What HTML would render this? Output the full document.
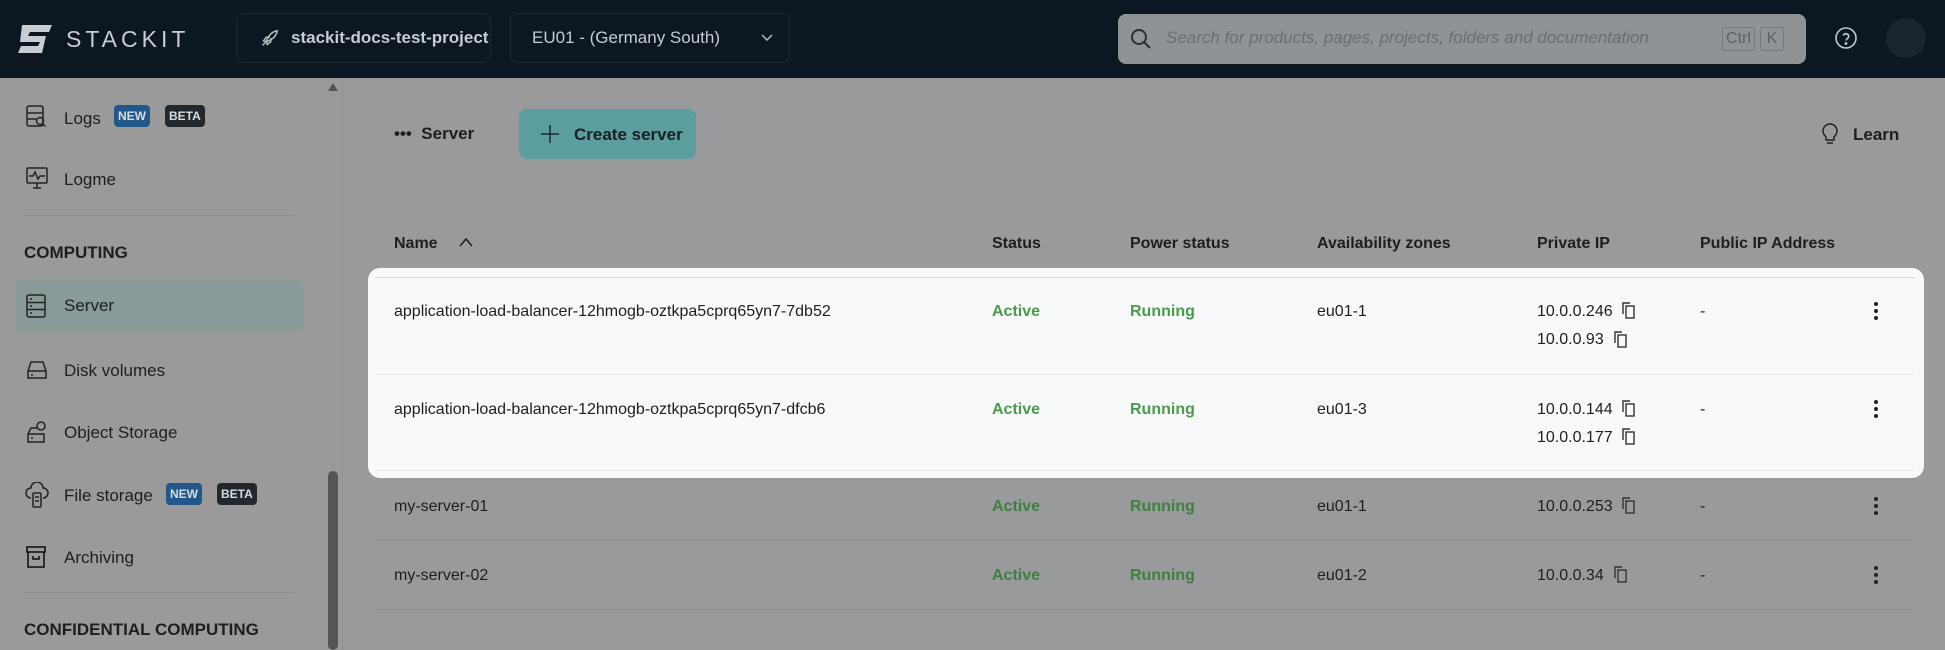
<!DOCTYPE html>
<html><head><meta charset="utf-8"><style>
*{margin:0;padding:0;box-sizing:border-box}
body{width:1945px;height:650px;overflow:hidden;background:#999a9b;font-family:"Liberation Sans Narrow","Liberation Sans",sans-serif;color:#1c1f22;position:relative;font-size:16px}
.a{position:absolute;white-space:nowrap}
.t{padding-top:2px}
.hdr{position:absolute;left:0;top:0;width:1945px;height:78px;background:#0c1722}
.box{position:absolute;border:1px solid #1d2832;border-radius:8px}
.side{position:absolute;left:0;top:78px;width:343px;height:572px;background:#9a9a9a;border-right:1px solid #909090}
.badge{position:absolute;height:22px;border-radius:4px;color:#d8dde2;font-size:12px;font-weight:bold;line-height:22px;padding:0 4px}
.b{font-weight:bold}
.g{color:#3f7f3f;font-weight:bold}
.gw{color:#4a9a4a;font-weight:bold}
.sep{position:absolute;height:1px;background:#8d8d8d}
svg{position:absolute}
</style></head><body>
<div class="hdr"></div>
<svg style="left:18px;top:25px" width="36" height="28" viewBox="0 0 36 28"><path d="M4 0H34L31 7H12L10 11H28L24 28H0L3 21H20L22 17H2Z" fill="#c9ccd0"/></svg>
<div class="a" style="left:66px;top:26px;font-family:'Liberation Sans',sans-serif;font-size:23px;letter-spacing:4px;color:#c9ccd0">STACKIT</div>
<div class="box" style="left:236px;top:13px;width:255px;height:50px"></div>
<svg style="left:258px;top:28px" width="22" height="22" viewBox="0 0 24 24" fill="none" stroke="#b8bcc0" stroke-width="1.6"><path d="M5 19l3-3M9 15c2-6 6-11 12-12-1 6-6 10-12 12zM9 15l-3-1 3-4h4M9 15l1 3 4-3v-4"/></svg>
<div class="a b" style="left:291px;top:28px;font-size:17px;color:#c8ccd0">stackit-docs-test-project</div>
<div class="box" style="left:510px;top:13px;width:280px;height:50px"></div>
<div class="a" style="left:532px;top:28px;font-size:17px;color:#c8ccd0">EU01 - (Germany South)</div>
<svg style="left:760px;top:33px" width="14" height="10" viewBox="0 0 14 10" fill="none" stroke="#b8bcc0" stroke-width="1.5"><path d="M2 2l5 5 5-5"/></svg>
<div class="a" style="left:1118px;top:14px;width:688px;height:50px;border-radius:8px;background:#8f9396"></div>
<svg style="left:1130px;top:28px" width="22" height="22" viewBox="0 0 22 22" fill="none" stroke="#2a2f33" stroke-width="2"><circle cx="9" cy="9" r="7"/><path d="M14 14l6 6"/></svg>
<div class="a" style="left:1166px;top:28px;font-size:17px;font-style:italic;color:#6a6e72">Search for products, pages, projects, folders and documentation</div>
<div class="a" style="left:1722px;top:27px;width:33px;height:24px;border:1px solid #74787b;border-radius:3px;font-size:16px;color:#5d6164;text-align:center;line-height:22px">Ctrl</div>
<div class="a" style="left:1760px;top:27px;width:24px;height:24px;border:1px solid #74787b;border-radius:3px;font-size:16px;color:#5d6164;text-align:center;line-height:22px">K</div>
<svg style="left:1834px;top:26px" width="24" height="24" viewBox="0 0 24 24" fill="none" stroke="#c4c8cc" stroke-width="1.6"><circle cx="12" cy="12" r="10"/><path d="M9.3 9.5a2.8 2.8 0 015.4 1c0 2-2.7 2.3-2.7 4"/><circle cx="12" cy="17.5" r=".6" fill="#c4c8cc"/></svg>
<div class="a" style="left:1886px;top:18px;width:40px;height:40px;border-radius:50%;background:#1a252f"></div>

<div class="side"></div>
<div class="a" style="left:328px;top:83px;width:0;height:0;border-left:5px solid transparent;border-right:5px solid transparent;border-bottom:8px solid #555"></div>
<div class="a" style="left:328px;top:471px;width:10px;height:179px;border-radius:5px;background:#555"></div>
<svg style="left:26px;top:105px" width="22" height="24" viewBox="0 0 22 24" fill="none" stroke="#222" stroke-width="1.5"><rect x="1" y="1" width="16" height="20" rx="2"/><path d="M1 8h16M1 14h9"/><circle cx="14" cy="16" r="3.5"/><path d="M16.5 18.5l3 3"/></svg>
<div class="a t" style="left:64px;top:107px;font-size:17px">Logs</div>
<div class="badge" style="left:114px;top:105px;background:#22578a">NEW</div>
<div class="badge" style="left:165px;top:105px;background:#23282d">BETA</div>
<svg style="left:26px;top:167px" width="22" height="22" viewBox="0 0 22 22" fill="none" stroke="#222" stroke-width="1.5"><rect x="1" y="1" width="20" height="15" rx="1"/><path d="M3 9h4l2-4 3 7 2-3h5M11 16v5M7 21h8"/></svg>
<div class="a t" style="left:64px;top:168px;font-size:17px">Logme</div>
<div class="sep" style="left:24px;top:215px;width:270px"></div>
<div class="a b t" style="left:24px;top:241px;font-size:17px">COMPUTING</div>
<div class="a" style="left:15px;top:280px;width:288px;height:52px;border-radius:8px;background:#899a99"></div>
<svg style="left:26px;top:294px" width="20" height="24" viewBox="0 0 20 24" fill="none" stroke="#222" stroke-width="1.5"><rect x="1" y="1" width="18" height="22" rx="2"/><path d="M1 8.5h18M1 15.5h18M4 5h2M4 12h2M4 19h2"/></svg>
<div class="a t" style="left:64px;top:294px;font-size:17px">Server</div>
<svg style="left:26px;top:360px" width="22" height="20" viewBox="0 0 22 20" fill="none" stroke="#222" stroke-width="1.5"><path d="M2 11l3-9h12l3 9v7H2zM2 11h18M5 15h2"/></svg>
<div class="a t" style="left:64px;top:359px;font-size:17px">Disk volumes</div>
<svg style="left:26px;top:420px" width="22" height="24" viewBox="0 0 22 24" fill="none" stroke="#222" stroke-width="1.5"><path d="M2 14l3-6h6M2 14h16v8H2zM5 18h2"/><circle cx="15" cy="6" r="4"/></svg>
<div class="a t" style="left:64px;top:421px;font-size:17px">Object Storage</div>
<svg style="left:25px;top:482px" width="24" height="26" viewBox="0 0 24 26" fill="none" stroke="#222" stroke-width="1.5"><path d="M6 16a5 5 0 010-10 6 6 0 0112 0 5 5 0 010 10"/><rect x="8" y="11" width="8" height="14" rx="1"/><path d="M10 15h4M10 19h4"/></svg>
<div class="a t" style="left:64px;top:484px;font-size:17px">File storage</div>
<div class="badge" style="left:166px;top:483px;background:#22578a">NEW</div>
<div class="badge" style="left:217px;top:483px;background:#23282d">BETA</div>
<svg style="left:26px;top:546px" width="20" height="22" viewBox="0 0 20 22" fill="none" stroke="#222" stroke-width="1.8"><rect x="1" y="1" width="18" height="5"/><path d="M2 6v15h16V6M7 10v3h6v-3"/></svg>
<div class="a t" style="left:64px;top:546px;font-size:17px">Archiving</div>
<div class="sep" style="left:24px;top:592px;width:270px"></div>
<div class="a b t" style="left:24px;top:618px;font-size:17px">CONFIDENTIAL COMPUTING</div>

<div class="a b t" style="left:394px;top:122px;font-size:17px">&bull;&bull;&bull;&nbsp;&nbsp;Server</div>
<div class="a" style="left:519px;top:109px;width:177px;height:50px;border-radius:8px;background:#5c9e9f"></div>
<svg style="left:540px;top:124px" width="20" height="20" viewBox="0 0 20 20" stroke="#1c2a2a" stroke-width="1.5"><path d="M10 1v18M1 10h18"/></svg>
<div class="a b t" style="left:574px;top:123px;font-size:17px">Create server</div>
<svg style="left:1822px;top:122px" width="16" height="24" viewBox="0 0 16 24" fill="none" stroke="#222" stroke-width="1.5"><path d="M4 15c-2-2-3-4-3-6a7 7 0 0114 0c0 2-1 4-3 6v3H4zM5 21h6"/></svg>
<div class="a b t" style="left:1853px;top:123px;font-size:17px">Learn</div>

<div class="a b t" style="left:394px;top:233px">Name</div>
<svg style="left:458px;top:236px" width="16" height="12" viewBox="0 0 16 12" fill="none" stroke="#222" stroke-width="1.6"><path d="M2 10l6-7 6 7"/></svg>
<div class="a b t" style="left:992px;top:233px">Status</div>
<div class="a b t" style="left:1130px;top:233px">Power status</div>
<div class="a b t" style="left:1317px;top:233px">Availability zones</div>
<div class="a b t" style="left:1537px;top:233px">Private IP</div>
<div class="a b t" style="left:1700px;top:233px">Public IP Address</div>

<div class="a" style="left:368px;top:268px;width:1556px;height:210px;border-radius:12px;background:#f8f9fb"></div>
<div class="a" style="left:375px;top:277px;width:1540px;height:1px;background:#d8dbde"></div>
<div class="a" style="left:375px;top:374px;width:1540px;height:1px;background:#e6e8ea"></div>
<div class="a" style="left:375px;top:470px;width:1540px;height:1px;background:#e6e8ea"></div>
<div class="sep" style="left:375px;top:540px;width:1540px"></div>
<div class="sep" style="left:375px;top:609px;width:1540px"></div>

<div class="a t" style="left:394px;top:301px">application-load-balancer-12hmogb-oztkpa5cprq65yn7-7db52</div>
<div class="a gw t" style="left:992px;top:301px">Active</div>
<div class="a gw t" style="left:1130px;top:301px">Running</div>
<div class="a t" style="left:1317px;top:301px">eu01-1</div>
<div class="a t" style="left:1537px;top:301px">10.0.0.246</div>
<div class="a t" style="left:1537px;top:329px">10.0.0.93</div>
<div class="a t" style="left:1700px;top:301px">-</div>

<div class="a t" style="left:394px;top:399px">application-load-balancer-12hmogb-oztkpa5cprq65yn7-dfcb6</div>
<div class="a gw t" style="left:992px;top:399px">Active</div>
<div class="a gw t" style="left:1130px;top:399px">Running</div>
<div class="a t" style="left:1317px;top:399px">eu01-3</div>
<div class="a t" style="left:1537px;top:399px">10.0.0.144</div>
<div class="a t" style="left:1537px;top:427px">10.0.0.177</div>
<div class="a t" style="left:1700px;top:399px">-</div>

<div class="a t" style="left:394px;top:496px">my-server-01</div>
<div class="a g t" style="left:992px;top:496px">Active</div>
<div class="a g t" style="left:1130px;top:496px">Running</div>
<div class="a t" style="left:1317px;top:496px">eu01-1</div>
<div class="a t" style="left:1537px;top:496px">10.0.0.253</div>
<div class="a t" style="left:1700px;top:496px">-</div>

<div class="a t" style="left:394px;top:565px">my-server-02</div>
<div class="a g t" style="left:992px;top:565px">Active</div>
<div class="a g t" style="left:1130px;top:565px">Running</div>
<div class="a t" style="left:1317px;top:565px">eu01-2</div>
<div class="a t" style="left:1537px;top:565px">10.0.0.34</div>
<div class="a t" style="left:1700px;top:565px">-</div>

<svg width="0" height="0"><defs><g id="cp" fill="none" stroke="#333" stroke-width="1.4"><path d="M1 12V1h7"/><rect x="4" y="4" width="8" height="12"/></g></defs></svg>
<svg style="left:1622px;top:302px" width="14" height="18"><use href="#cp"/></svg>
<svg style="left:1614px;top:331px" width="14" height="18"><use href="#cp"/></svg>
<svg style="left:1622px;top:400px" width="14" height="18"><use href="#cp"/></svg>
<svg style="left:1622px;top:428px" width="14" height="18"><use href="#cp"/></svg>
<svg style="left:1622px;top:497px" width="14" height="18"><use href="#cp"/></svg>
<svg style="left:1614px;top:566px" width="14" height="18"><use href="#cp"/></svg>
<svg width="0" height="0"><defs><g id="kb" fill="#222"><circle cx="3" cy="3" r="2"/><circle cx="3" cy="10" r="2"/><circle cx="3" cy="17" r="2"/></g></defs></svg>
<svg style="left:1873px;top:301px" width="6" height="20"><use href="#kb"/></svg>
<svg style="left:1873px;top:399px" width="6" height="20"><use href="#kb"/></svg>
<svg style="left:1873px;top:496px" width="6" height="20"><use href="#kb"/></svg>
<svg style="left:1873px;top:565px" width="6" height="20"><use href="#kb"/></svg>
</body></html>
